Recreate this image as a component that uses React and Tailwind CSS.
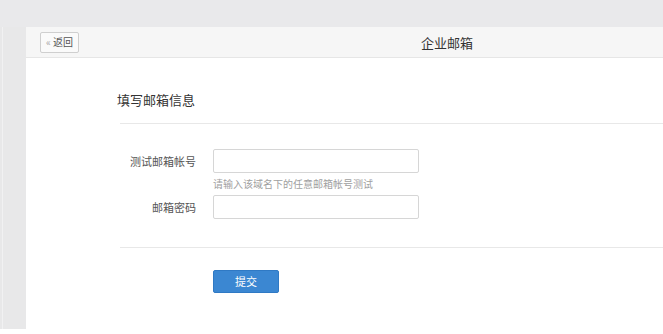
export default function App() {
  const font = { fontFamily: '"Noto Sans CJK SC", "Noto Sans", sans-serif' };
  return (
    <div className="w-[663px] h-[334px] overflow-hidden bg-white" style={font}>
      <div className="h-[27px] bg-[#e9e9eb]" />
      <div className="flex h-[302px]">
        <div className="w-[26px] shrink-0 bg-[#e8e8e9] flex">
          <div className="ml-[2px] w-[1px] bg-[#f1f1f2]" />
        </div>
        <div className="flex-1 flex flex-col bg-white min-w-0">
          <div className="h-[31px] shrink-0 bg-[#f6f6f6] border-b border-[#e6e6e6] flex items-center pl-[14px]">
            <button className="h-[21px] w-[39px] border border-[#cfcfcf] bg-[#fafafa] rounded-[2px] flex items-center justify-center text-[10px] leading-none text-[#555]">
              <span className="text-[#aaa] mr-[2px]">«</span>返回
            </button>
            <div className="ml-[342px] text-[13px] leading-none text-[#333] whitespace-nowrap">企业邮箱</div>
          </div>
          <div className="pl-[94px] pt-[33px]">
            <div className="border-b border-[#e8e8e8] pb-[14px]">
              <div className="text-[13px] leading-[18px] text-[#333] -ml-[3px]">填写邮箱信息</div>
            </div>
            <div className="pt-[25px] pb-[28px] border-b border-[#e8e8e8]">
              <div className="flex items-center h-[24px]">
                <div className="w-[76px] text-right text-[11px] text-[#555] leading-none">测试邮箱帐号</div>
                <div className="ml-[17px] w-[206px] h-[24px] border border-[#d6d6d6] rounded-[2px] bg-white" />
              </div>
              <div className="ml-[93px] h-[22px] flex items-center text-[10px] text-[#a0a0a0] leading-none">
                请输入该域名下的任意邮箱帐号测试
              </div>
              <div className="flex items-center h-[24px]">
                <div className="w-[76px] text-right text-[11px] text-[#555] leading-none">邮箱密码</div>
                <div className="ml-[17px] w-[206px] h-[24px] border border-[#d6d6d6] rounded-[2px] bg-white" />
              </div>
            </div>
            <div className="pt-[22px] pl-[93px]">
              <button className="w-[66px] h-[23px] bg-[#3b87d2] border border-[#2f79c4] rounded-[2px] text-white text-[11px] leading-none flex items-center justify-center">
                提交
              </button>
            </div>
          </div>
        </div>
      </div>
    </div>
  );
}
